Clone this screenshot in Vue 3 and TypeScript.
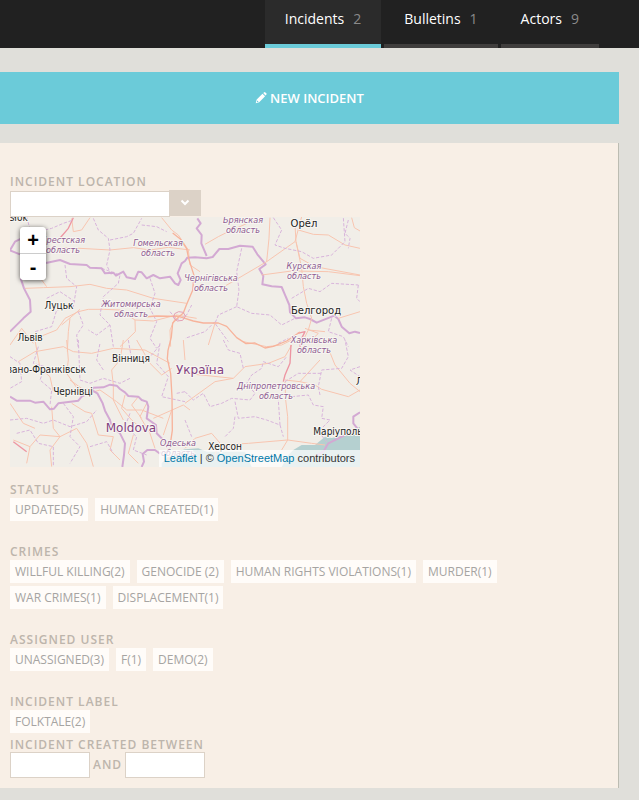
<script setup lang="ts">
import { ref } from 'vue'

interface Tab { name: string; count: number }
interface Facet { title: string; items: string[] }
interface Place { x: number; y: number; lines: string[]; kind: 'city' | 'town' | 'region' | 'country' }

const tabs: Tab[] = [
  { name: 'Incidents', count: 2 },
  { name: 'Bulletins', count: 1 },
  { name: 'Actors', count: 9 },
]
const active = ref('Incidents')

const facets: Facet[] = [
  { title: 'Status', items: ['Updated(5)', 'Human Created(1)'] },
  {
    title: 'Crimes',
    items: ['Willful Killing(2)', 'Genocide (2)', 'Human Rights Violations(1)', 'Murder(1)', 'War Crimes(1)', 'Displacement(1)'],
  },
  { title: 'Assigned User', items: ['Unassigned(3)', 'f(1)', 'Demo(2)'] },
  { title: 'Incident Label', items: ['Folktale(2)'] },
]

const places: Place[] = [
  { x: 6, y: 4, lines: ['ysłok'], kind: 'town' },
  { x: 294, y: 10, lines: ['Орёл'], kind: 'city' },
  { x: 306, y: 97, lines: ['Белгород'], kind: 'city' },
  { x: 49, y: 92, lines: ['Луцьк'], kind: 'town' },
  { x: 20, y: 124, lines: ['Львів'], kind: 'town' },
  { x: 121, y: 145, lines: ['Вінниця'], kind: 'town' },
  { x: 35, y: 156, lines: ['Івано-Франківськ'], kind: 'town' },
  { x: 63, y: 178, lines: ['Чернівці'], kind: 'town' },
  { x: 215, y: 233, lines: ['Херсон'], kind: 'town' },
  { x: 328, y: 218, lines: ['Маріуполь'], kind: 'town' },
  { x: 368, y: 168, lines: ['Луганськ'], kind: 'town' },
  { x: 53, y: 26, lines: ['Брестская', 'область'], kind: 'region' },
  { x: 148, y: 29, lines: ['Гомельская', 'область'], kind: 'region' },
  { x: 233, y: 6, lines: ['Брянская', 'область'], kind: 'region' },
  { x: 294, y: 52, lines: ['Курская', 'область'], kind: 'region' },
  { x: 201, y: 64, lines: ['Чернігівська', 'область'], kind: 'region' },
  { x: 121, y: 90, lines: ['Житомирська', 'область'], kind: 'region' },
  { x: 304, y: 126, lines: ['Харківська', 'область'], kind: 'region' },
  { x: 266, y: 172, lines: ['Дніпропетровська', 'область'], kind: 'region' },
  { x: 168, y: 229, lines: ['Одеська', 'область'], kind: 'region' },
  { x: 190, y: 157, lines: ['Україна'], kind: 'country' },
  { x: 121, y: 215, lines: ['Moldova'], kind: 'country' },
]
</script>

<template>
  <header class="topbar">
    <nav class="tabs">
      <a
        v-for="tab in tabs"
        :key="tab.name"
        href="#"
        class="tab"
        :class="{ active: tab.name === active }"
        @click.prevent="active = tab.name"
      >{{ tab.name }}<span class="count">{{ tab.count }}</span></a>
    </nav>
  </header>

  <main class="content">
    <button type="button" class="create">
      <svg class="pencil" viewBox="0 0 12 12" aria-hidden="true">
        <path d="M8.2 1.1 9 .4q.7-.6 1.4 0l.9.9q.6.7 0 1.4l-.8.8zM7.5 1.7l2.6 2.6-5.9 5.9-3.5 1 1-3.6zM2.3 8.5l-.5 1.8 1.8-.5z" />
      </svg>
      New Incident
    </button>

    <section class="panel">
      <label class="heading" for="location">Incident Location</label>
      <div class="combo">
        <input id="location" type="text" class="field location">
        <button type="button" class="toggle" aria-label="Show locations">
          <svg viewBox="0 0 10 8" aria-hidden="true"><path d="M1.5 1.5 5 5 8.5 1.5" /></svg>
        </button>
      </div>

      <div class="map">
        <svg class="tiles" viewBox="0 0 350 250" role="img" aria-label="Map">
          <g transform="scale(.33333)">
            <g transform="translate(525 369)" class="water">
              <path d="M325 330 350 315 390 315 420 290 440 294 470 287 500 275 525 260V381H290L310 345zM-70 370-40 340 0 328 40 325 65 335 180 335 200 381H-70z" />
            </g>
            <g transform="translate(0 -6)">
              <path class="road" d="M185 10 190 50 215 45 240 8M140 98 210 100 300 105 370 98 420 105 475 97 540 105M455 8 485 45 505 60 535 105 540 150 570 170M45 220 100 218 180 215 240 208 290 220 350 225 430 250 530 265M0 390 35 340 70 385M65 375 140 345 165 310 205 290 235 283 280 283 330 285 375 315 430 318 500 300 560 310M500 300 480 345 482 395M180 310 175 350 172 410M375 315 376 350 330 395M210 283 155 330M95 195 110 215" />
              <path class="road strong" d="M190 8 175 40 145 75" />
              <path class="district" d="M50 6 58 35 90 65M105 45 125 40 160 25 190 15M250 10 265 45 295 70 300 105 290 150 305 182M300 75 350 65 370 55 395 10M395 30 440 35 470 50M165 150 170 190 200 215 190 275 140 285 125 335 75 350M275 160 330 180 325 205 280 245 270 300 300 330 310 395M420 190 435 235 420 280 440 320 420 370 440 400M205 290 220 330 200 360 205 400M480 290 500 315 530 300 545 270M300 330 260 360 235 345M110 250 150 230 195 260" />
              <path class="border" d="M0 106 15 80 35 70M0 106 30 118M108 144 150 135 180 147 230 150 240 158 275 160 285 175 310 173 318 182 340 170 350 187 375 192 385 170 395 172 410 190 430 180 450 190 480 185 495 205 505 210 512 195 503 175 515 145 525 138 532 128 555 127 590 130 608 126 628 102 655 102 690 92 728 95 742 118 767 148 748 162 760 183 757 208 785 214 815 216 826 242 838 270 840 292 858 310 885 307 900 312 920 323 973 302 985 312 995 335 1018 355 1035 350 1050 354M562 10 572 25 560 40 575 60 574 85 590 123M32 190 42 220 60 255 62 290 40 310 0 350" />
            </g>
            <g transform="translate(525 -6)">
              <path class="road" d="M60 88 100 65 130 50 180 28 215 10M255 8 252 70 245 140 330 80 350 5M100 225 245 140M330 30 333 80 345 130 390 155 525 180M230 180 320 168 430 170 525 182M333 80 350 160 355 215 365 265 380 310 370 345 345 395M340 45 385 58 430 60 480 90 525 100M500 8 508 38 525 48M370 345 420 350M90 325 70 390M460 310 525 290M360 340 400 355 380 375" />
              <path class="road strong" d="M338 355 360 350 350 370 345 395" />
              <path class="district" d="M170 100 155 170 162 225 155 275 200 295 255 300 290 330 330 310M90 320 60 350 0 370M155 275 100 300 90 325 130 380M265 8 290 45 270 90 300 100 350 110 385 130 440 120 480 80 475 8M490 15 480 55 495 70 490 100M320 250 370 220 405 230 440 205 520 210M440 310 430 350 475 365 490 395M520 210 515 250 525 260M280 385 310 370" />
            </g>
            <g transform="translate(0 369)">
              <path class="road" d="M25 65 75 35 160 20 190 35 245 40 310 25 405 30 480 70M170 0 175 60 170 100 205 150 250 145M340 0 330 60 305 90 310 135 310 180 340 240M380 0 420 70 455 105 485 85M485 210 460 285M430 235 520 195 540 210M180 120 235 160 270 150 320 185 350 210 395 210 460 235M345 165 335 205 365 240 405 275M125 200 130 265 150 290 120 330 125 380M185 190 225 215 245 220 265 285 310 290 300 330 330 360M10 300 60 320 90 285 150 290 200 265 230 310 250 380M60 320 50 370M0 190 40 250 75 265M410 190 390 230 420 280 435 325M370 285 355 340 385 370M520 0 525 60M75 0 90 85 120 110 130 155M385 170 365 195 395 235" />
              <path class="road strong" d="M10 305 50 335" />
              <path class="district" d="M85 20 70 70 105 80 90 120 125 150 120 195M205 0 210 120 240 130 280 115 330 130 360 115M355 0 365 60 425 45 450 15M280 90 260 60 270 10M450 10 440 70 475 110 455 170 525 185M0 240 50 235 100 250 130 240 180 260 230 245 260 210M20 280 60 270 85 310 130 320 130 380M160 190 190 230 180 290 210 320 180 370M240 320 290 305 310 340M360 220 345 260 380 290 370 330 410 345M0 50 30 70 35 125 0 145M500 160 525 155" />
              <path class="border" d="M0 170 20 182 60 182 75 188 100 185 120 208 132 206 145 190 205 182 215 170 238 158 250 143 280 142 300 134 320 137 330 147 345 157 355 168 385 170 395 180 410 185 415 200 410 235 438 255 440 280 460 300 480 318M242 148 262 160 278 190 285 212 300 240 305 260 330 280 345 310 342 345 337 381M395 381 402 365 398 342 412 330 435 330 448 340 465 334" />
            </g>
            <g transform="translate(525 369)">
              <path class="road" d="M175 5 245 20 290 15 320 0M320 15 300 50 250 70 180 80 145 115 90 125 0 190M145 115 0 100M300 125 302 180 308 230 308 300 190 310 110 315 80 280 30 295 0 325M300 120 345 125 390 135 410 148 490 170 525 150M430 25 450 75 495 130 525 155M345 125 405 60M308 300 380 310 420 315M308 300 290 330M100 315 90 345" />
              <path class="road strong" d="M318 15 315 70 300 105 295 125" />
              <path class="district" d="M0 155 25 180 55 160 75 200 110 190 140 175 195 180 210 160 185 130 200 105 230 85 235 65 280 80 305 50M115 0 130 30 165 40 175 85M150 185 160 235 210 230 245 240 285 255 280 180M150 230 145 265 120 290M320 170 370 165 385 195 415 200 410 235 435 240 400 275 425 305M405 165 400 140 410 90 470 85 490 50 480 0M285 255 295 290M300 125 340 100 410 100M525 80 495 90 525 110M0 240 20 290" />
              <path class="border" d="M525 217 505 230 505 250 517 265 480 285 430 310 415 335 390 350" />
            </g>
            <path class="road trunk" d="M488 48 510 65 530 95 536 125 552 175 548 220 530 262 520 288 506 300 488 318 484 360 474 400 472 425 482 470 486 540 487 640 478 700 472 740M506 298 550 312 580 318 625 318 650 328 680 362 708 380 735 378 765 393 790 388 830 372 870 345M400 300 440 297 506 298" />
            <path class="ring" d="M494 290 506 284 520 286 526 298 518 310 502 312 490 302z" />
          </g>
          <text v-for="p in places" :key="p.lines[0]" :class="p.kind">
            <tspan v-for="(line, i) in p.lines" :key="i" :x="p.x" :y="p.y + i * 10">{{ line }}</tspan>
          </text>
        </svg>
        <div class="zoom">
          <button type="button" aria-label="Zoom in">+</button>
          <button type="button" aria-label="Zoom out">-</button>
        </div>
        <div class="attribution">
          <a href="#">Leaflet</a> | © <a href="#">OpenStreetMap</a> contributors
        </div>
      </div>

      <div v-for="facet in facets" :key="facet.title" class="facet">
        <h2 class="heading">{{ facet.title }}</h2>
        <div class="chips">
          <button v-for="item in facet.items" :key="item" type="button" class="chip">{{ item }}</button>
        </div>
      </div>

      <div class="dates">
        <label class="heading" for="created-from">Incident Created Between</label>
        <div class="range">
          <input id="created-from" type="text" class="field date">
          <label class="heading" for="created-to">and</label>
          <input id="created-to" type="text" class="field date">
        </div>
      </div>
    </section>
  </main>
</template>

<style>
body {
  background: #e0dfda;
  font-family: "Open Sans", "Noto Sans", sans-serif;
}
</style>

<style scoped>
.topbar {
  display: flex;
  justify-content: flex-end;
  height: 48px;
  padding-right: 40px;
  background: #212121;
}
.tabs {
  display: flex;
  gap: 3px;
}
.tab {
  box-sizing: border-box;
  padding: 9px 20px 0;
  border-bottom: 4px solid #403e3d;
  color: #fff;
  font-size: 14px;
  line-height: 20px;
  text-decoration: none;
}
.tab.active {
  background: #2b2b2b;
  border-color: #6bcbd9;
}
.count {
  margin-left: 9px;
  color: #8a8a8a;
}
.content {
  padding: 24px 20px 11px 0;
}
.create {
  display: flex;
  align-items: center;
  justify-content: center;
  gap: 3px;
  width: 100%;
  height: 52px;
  margin-bottom: 19px;
  padding: 0;
  border: 0;
  background: #6bcbd9;
  color: #fff;
  font: 600 13px/20px "Open Sans", sans-serif;
  text-transform: uppercase;
}
.pencil {
  width: 12px;
  height: 12px;
  fill: #fff;
  fill-rule: evenodd;
}
.panel {
  padding: 32px 20px 10px 10px;
  border-right: 1px solid #bcbcb2;
  background: #f8efe6;
}
.heading {
  display: block;
  margin: 0;
  color: #bdb5ac;
  font-size: 12px;
  font-weight: 600;
  letter-spacing: 1px;
  line-height: 14px;
  text-transform: uppercase;
}
.combo {
  display: flex;
  align-items: flex-end;
  height: 28px;
}
.field {
  box-sizing: border-box;
  height: 26px;
  padding: 2px 5px;
  border: 1px solid #dcd2c7;
  border-radius: 0;
  background: #fff;
  color: #666;
  font: 12px/20px "Open Sans", sans-serif;
}
.location {
  width: 160px;
}
.toggle {
  display: flex;
  align-items: center;
  justify-content: center;
  width: 32px;
  height: 26px;
  margin: 0 0 1px -1px;
  padding: 0;
  border: 0;
  background: #dcd2c7;
}
.toggle svg {
  width: 10px;
  height: 8px;
  fill: none;
  stroke: #fff;
  stroke-width: 2;
}
.map {
  position: relative;
  width: 350px;
  max-width: 100%;
  margin-bottom: 16px;
  overflow: hidden;
  background: #f1eee8;
}
.tiles {
  display: block;
  width: 100%;
}
.tiles path {
  fill: none;
  stroke-linejoin: round;
}
.tiles .water path {
  fill: #b5d0d0;
}
.tiles .road {
  stroke: #f8c5b0;
  stroke-width: 3;
}
.tiles .road.trunk {
  stroke: #f7b39b;
  stroke-width: 4;
}
.tiles .road.strong {
  stroke: #ed95a2;
  stroke-width: 4;
}
.tiles .ring {
  stroke: #e3a0b4;
  stroke-width: 3;
}
.tiles .district {
  stroke: #d8b4db;
  stroke-width: 3;
  stroke-dasharray: 10 5;
}
.tiles .border {
  stroke: #d3a9d3;
  stroke-width: 6;
}
.tiles text {
  font-family: "DejaVu Sans", sans-serif;
  text-anchor: middle;
  paint-order: stroke;
  stroke: #f8f6f2;
  stroke-width: 2px;
  stroke-linejoin: round;
}
.tiles .city {
  font-size: 10px;
  fill: #222;
}
.tiles .town {
  font-family: "DejaVu Sans Condensed", "DejaVu Sans", sans-serif;
  font-size: 10px;
  fill: #222;
}
.tiles .region {
  font-family: "DejaVu Sans Condensed", "DejaVu Sans", sans-serif;
  font-size: 9px;
  font-style: italic;
  fill: #8d5b91;
}
.tiles .country {
  font-size: 12px;
  fill: #82417f;
}
.zoom {
  position: absolute;
  top: 10px;
  left: 10px;
  width: 26px;
  overflow: hidden;
  border-radius: 4px;
  box-shadow: 0 1px 5px rgba(0, 0, 0, .65);
}
.zoom button {
  display: block;
  width: 26px;
  height: 26px;
  padding: 0;
  border: 0;
  background: #fff;
  color: #000;
  font: bold 20px/26px "Liberation Sans", sans-serif;
}
.zoom button + button {
  height: 27px;
  border-top: 1px solid #ccc;
}
.attribution {
  position: absolute;
  right: 0;
  bottom: 0;
  padding: 0 5px;
  background: rgba(255, 255, 255, .7);
  color: #333;
  font: 11px/17px "Liberation Sans", sans-serif;
}
.attribution a {
  color: #0078a8;
  text-decoration: none;
}
.facet {
  margin-bottom: 24px;
}
.facet .heading {
  margin-bottom: 1px;
}
.facet:nth-last-child(2) {
  margin-bottom: 5px;
}
.chips {
  display: flex;
  flex-wrap: wrap;
  gap: 3px 7px;
}
.chip {
  height: 23px;
  padding: 0 5px;
  border: 0;
  background: #fffcf9;
  color: #a6a4a2;
  font: 12px/23px "Open Sans", sans-serif;
  text-transform: uppercase;
}
.range {
  display: flex;
  align-items: center;
  gap: 3px;
}
.date {
  width: 80px;
}
</style>
